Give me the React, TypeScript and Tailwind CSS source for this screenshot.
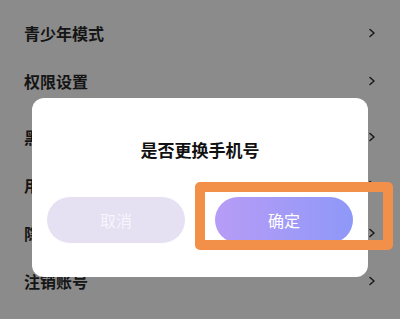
import React from "react"

const rows = ["青少年模式", "权限设置", "黑名单", "用户协议", "隐私政策", "注销账号"]

function Chevron() {
  return (
    <svg width="8" height="10" viewBox="0 0 8 10" fill="none">
      <polyline points="2,1.5 6,5 2,8.5" stroke="#1c1c1c" strokeWidth="1.6" strokeLinecap="round" strokeLinejoin="round" />
    </svg>
  )
}

export default function App() {
  return (
    <div
      className="relative w-[400px] h-[319px] overflow-hidden bg-[#8b8b8b]"
      style={{ fontFamily: '"Noto Sans CJK SC", "Noto Sans", sans-serif' }}
    >
      {/* settings list under the dim layer */}
      <div className="flex flex-col pt-[9px] pl-[24px] pr-[24px]">
        {rows.map((label, i) => (
          <div key={label} className={`flex items-center justify-between h-[48px] ${i === 2 ? "mt-[8px]" : ""}`}>
            <span className="text-[16px] font-bold text-[#151515] leading-none">{label}</span>
            <Chevron />
          </div>
        ))}
      </div>

      {/* dialog */}
      <div className="absolute left-[32px] top-[98px] w-[336px] h-[179px] rounded-[12px] bg-white flex flex-col items-center">
        <div className="mt-[40px] text-[17px] font-bold text-[#111] leading-[24px]">是否更换手机号</div>
        <div className="mt-[35px] flex gap-[30px]">
          <div className="w-[138px] h-[46px] rounded-full bg-[#e5e0f2] flex items-center justify-center text-[16px] text-[#f7f5fc]">
            取消
          </div>
          <div className="w-[138px] h-[46px] rounded-full bg-gradient-to-r from-[#b79cf6] to-[#8e98f8] flex items-center justify-center text-[16px] text-white">
            确定
          </div>
        </div>
      </div>

      {/* highlight box */}
      <div className="absolute left-[195px] top-[182px] w-[198px] h-[68px] border-[10px] border-[#f2904a] rounded-[5px]" />
    </div>
  )
}
